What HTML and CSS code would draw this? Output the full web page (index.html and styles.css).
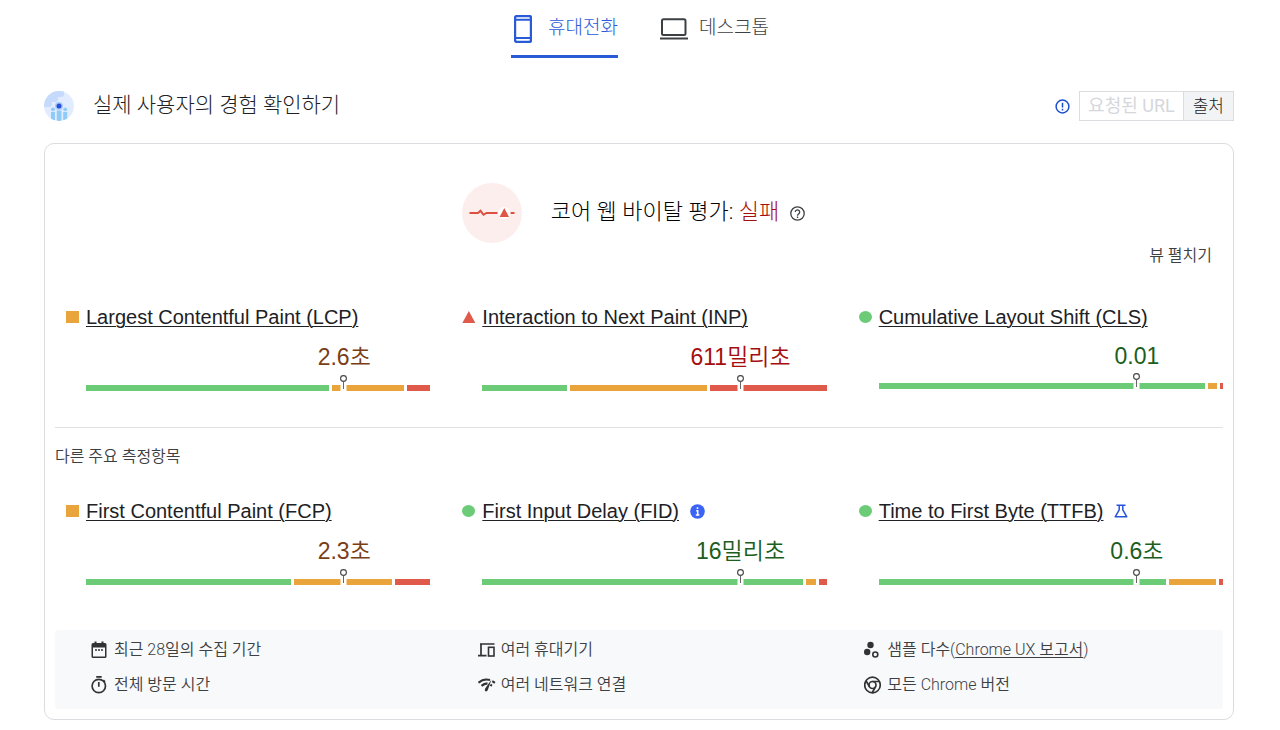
FILE: index.html
```html
<!DOCTYPE html>
<html lang="ko">
<head>
<meta charset="utf-8">
<meta name="viewport" content="width=device-width, initial-scale=1">
<title>실제 사용자의 경험 확인하기</title>
<link rel="stylesheet" href="styles.css">
</head>
<body>
<nav class="tabs" role="tablist">
  <button class="tab tab--active" type="button" role="tab" aria-selected="true">
    <svg class="tab-phone" width="18" height="28" viewBox="0 0 18 28" aria-hidden="true"><rect x="1" y="1" width="16" height="26" rx="2" fill="none" stroke="currentColor" stroke-width="2.4"/><path d="M1 4.8h16M1 23h16" stroke="currentColor" stroke-width="2"/></svg>
    <span>휴대전화</span>
  </button>
  <button class="tab" type="button" role="tab" aria-selected="false">
    <svg width="28" height="22" viewBox="0 0 28 22" aria-hidden="true"><rect x="2" y="1.2" width="23.500" height="15.8" rx="1.5" fill="none" stroke="currentColor" stroke-width="2"/><path d="M0 20.5h28" stroke="currentColor" stroke-width="2"/></svg>
    <span>데스크톱</span>
  </button>
</nav>

<main class="page">
  <header class="page-head">
    <svg width="30" height="30" viewBox="0 0 30 30" aria-hidden="true">
      <defs><clipPath id="disc"><circle cx="15" cy="15" r="15"/></clipPath></defs>
      <g clip-path="url(#disc)">
        <rect width="30" height="30" fill="#e1ecfe"/>
        <path d="M0 0h20v3a3 3 0 0 1-3 3h-3v2a3 3 0 0 1-3 3H8v2a3 3 0 0 1-3 3H0z" fill="#c5dafc"/>
        <g fill="#90caf9"><rect x="7" y="21" width="4" height="10"/><rect x="12.8" y="19.5" width="4.6" height="11"/><rect x="19.2" y="21" width="4" height="10"/><circle cx="9" cy="18.3" r="1.9"/><circle cx="21.2" cy="18.3" r="1.9"/></g>
        <circle cx="15" cy="15" r="4" fill="#a9cdfb"/><circle cx="15" cy="15" r="2.5" fill="#2a4fd7"/>
      </g>
    </svg>
    <h1 class="page-title">실제 사용자의 경험 확인하기</h1>
    <svg class="notice" width="15" height="15" viewBox="0 0 15 15" role="img" aria-label="알림"><circle cx="7.5" cy="7.5" r="6.4" fill="none" stroke="#1a4fd0" stroke-width="1.5"/><path d="M7.5 3.7v4.7M7.5 9.8v1.6" stroke="#1a4fd0" stroke-width="1.5"/></svg>
    <div class="scope">
      <button class="scope-btn scope-btn--off" type="button" disabled>요청된 URL</button>
      <button class="scope-btn scope-btn--on" type="button">출처</button>
    </div>
  </header>

  <section class="card">
    <div class="verdict">
      <svg width="60" height="60" viewBox="0 0 60 60" aria-hidden="true"><circle cx="30" cy="30" r="30" fill="#fdeeee"/><path d="M7.500 30h8.500l2.500-2.200 3 4 3-1.800h11" fill="none" stroke="#dc5040" stroke-width="2"/><path d="M48.500 30h4" stroke="#dc5040" stroke-width="2"/><circle cx="42.300" cy="30" r="6" fill="#fff"/><path d="M42.300 25l4.700 9h-9.400z" fill="#df5747"/></svg>
      <h2 class="verdict-title">코어 웹 바이탈 평가: <span class="fail">실패</span></h2>
      <svg class="help" width="15" height="15" viewBox="0 0 15 15" role="img" aria-label="도움말"><circle cx="7.5" cy="7.5" r="6.700" fill="none" stroke="#3c4043" stroke-width="1.300"/><path d="M5.300 6.100a2.200 2.200 0 1 1 3.500 1.700c-.9.700-1.300 1-1.300 1.900M7.500 10.500v1.400" fill="none" stroke="#3c4043" stroke-width="1.300"/></svg>
    </div>
    <div class="expand"><button class="expand-btn" type="button">뷰 펼치기</button></div>

    <div class="metrics">
      <article class="metric">
        <div class="metric-head"><i class="mark mark--mid"></i><a class="metric-name" href="#lcp">Largest Contentful Paint (LCP)</a></div>
        <div class="metric-value mid">2.6초</div>
        <div class="bar"><span class="seg seg--good" style="flex-grow:245"></span><span class="seg seg--mid" style="flex-grow:72"></span><span class="seg seg--poor" style="flex-grow:24"></span><svg class="pin" width="7" height="16" viewBox="0 0 7 16"><path d="M0.500 10h6v6h-6z" fill="#fff"/><circle cx="3.500" cy="3.500" r="2.900" fill="#fff" stroke="#444" stroke-width="1.100"/><path d="M3.500 6.500v7.500" stroke="#666"/></svg></div>
      </article>
      <article class="metric">
        <div class="metric-head"><i class="mark mark--poor"></i><a class="metric-name" href="#inp">Interaction to Next Paint (INP)</a></div>
        <div class="metric-value poor">611밀리초</div>
        <div class="bar"><span class="seg seg--good" style="flex-grow:85"></span><span class="seg seg--mid" style="flex-grow:138"></span><span class="seg seg--poor" style="flex-grow:117"></span><svg class="pin" width="7" height="16" viewBox="0 0 7 16"><path d="M0.500 10h6v6h-6z" fill="#fff"/><circle cx="3.500" cy="3.500" r="2.900" fill="#fff" stroke="#444" stroke-width="1.100"/><path d="M3.500 6.500v7.500" stroke="#666"/></svg></div>
      </article>
      <article class="metric">
        <div class="metric-head"><i class="mark mark--good"></i><a class="metric-name" href="#cls">Cumulative Layout Shift (CLS)</a></div>
        <div class="metric-value metric-value--plain good">0.01</div>
        <div class="bar"><span class="seg seg--good" style="flex-grow:327"></span><span class="seg seg--mid" style="flex-grow:9"></span><span class="seg seg--poor" style="flex-grow:3"></span><svg class="pin" width="7" height="16" viewBox="0 0 7 16"><path d="M0.500 10h6v6h-6z" fill="#fff"/><circle cx="3.500" cy="3.500" r="2.900" fill="#fff" stroke="#444" stroke-width="1.100"/><path d="M3.500 6.500v7.500" stroke="#666"/></svg></div>
      </article>
    </div>

    <h3 class="other-title">다른 주요 측정항목</h3>

    <div class="metrics metrics--other">
      <article class="metric">
        <div class="metric-head"><i class="mark mark--mid"></i><a class="metric-name" href="#fcp">First Contentful Paint (FCP)</a></div>
        <div class="metric-value mid">2.3초</div>
        <div class="bar"><span class="seg seg--good" style="flex-grow:205"></span><span class="seg seg--mid" style="flex-grow:99"></span><span class="seg seg--poor" style="flex-grow:35"></span><svg class="pin" width="7" height="16" viewBox="0 0 7 16"><path d="M0.500 10h6v6h-6z" fill="#fff"/><circle cx="3.500" cy="3.500" r="2.900" fill="#fff" stroke="#444" stroke-width="1.100"/><path d="M3.500 6.500v7.500" stroke="#666"/></svg></div>
      </article>
      <article class="metric">
        <div class="metric-head"><i class="mark mark--good"></i><a class="metric-name" href="#fid">First Input Delay (FID)</a>
          <svg width="15" height="15" viewBox="0 0 15 15" role="img" aria-label="정보"><circle cx="7.500" cy="7.500" r="7.300" fill="#3b63f6"/><path d="M7.500 3.300v1.700M6.200 6.700h1.500v4M5.800 11h3.600" fill="none" stroke="#fff" stroke-width="1.500"/></svg></div>
        <div class="metric-value good">16밀리초</div>
        <div class="bar"><span class="seg seg--good" style="flex-grow:321"></span><span class="seg seg--mid" style="flex-grow:10"></span><span class="seg seg--poor" style="flex-grow:8"></span><svg class="pin" width="7" height="16" viewBox="0 0 7 16"><path d="M0.500 10h6v6h-6z" fill="#fff"/><circle cx="3.500" cy="3.500" r="2.900" fill="#fff" stroke="#444" stroke-width="1.100"/><path d="M3.500 6.500v7.500" stroke="#666"/></svg></div>
      </article>
      <article class="metric">
        <div class="metric-head"><i class="mark mark--good"></i><a class="metric-name" href="#ttfb">Time to First Byte (TTFB)</a>
          <svg width="14" height="14" viewBox="0 0 14 14" role="img" aria-label="실험용"><path d="M2.500 1.200h9M5.200 1.200v4.600L1.200 12.800h11.600L8.800 5.800V1.200" fill="none" stroke="#2754dc" stroke-width="1.500" stroke-linejoin="round"/></svg></div>
        <div class="metric-value good">0.6초</div>
        <div class="bar"><span class="seg seg--good" style="flex-grow:288"></span><span class="seg seg--mid" style="flex-grow:47"></span><span class="seg seg--poor" style="flex-grow:4"></span><svg class="pin" width="7" height="16" viewBox="0 0 7 16"><path d="M0.500 10h6v6h-6z" fill="#fff"/><circle cx="3.500" cy="3.500" r="2.900" fill="#fff" stroke="#444" stroke-width="1.100"/><path d="M3.500 6.500v7.500" stroke="#666"/></svg></div>
      </article>
    </div>

    <ul class="facts">
      <li class="fact"><svg width="18" height="18" viewBox="0 0 18 18" aria-hidden="true"><path d="M3.500 0.500h2v1.500h5v-1.500h2V2h1.500q1.500 0 1.500 1.500v12q0 1.500-1.500 1.500h-12q-1.500 0-1.500-1.500v-12Q.5 2 2 2h1.500z" fill="#333"/><path d="M2 6.500h12v9H2z" fill="#f8f9fa"/><path d="M4 9h2M7 9h2M10 9h2" stroke="#333" stroke-width="1.500"/></svg><span>최근 28일의 수집 기간</span></li>
      <li class="fact"><svg width="18" height="18" viewBox="0 0 18 18" aria-hidden="true"><path d="M2 3h14.500M3 3v11.700M0 14.700h8.500" fill="none" stroke="#333" stroke-width="1.700"/><rect x="10.500" y="6.300" width="5.500" height="8.700" fill="none" stroke="#333" stroke-width="1.600"/></svg><span>여러 휴대기기</span></li>
      <li class="fact"><svg width="18" height="18" viewBox="0 0 18 18" aria-hidden="true"><circle cx="6.500" cy="4" r="3.200" fill="#333"/><circle cx="3.200" cy="11" r="3.200" fill="#333"/><circle cx="11.300" cy="13.500" r="2.500" fill="none" stroke="#333" stroke-width="1.600"/></svg><span>샘플 다수(<a class="report" href="#crux">Chrome UX 보고서</a>)</span></li>
      <li class="fact"><svg width="18" height="18" viewBox="0 0 18 18" aria-hidden="true"><circle cx="7.800" cy="10" r="6.700" fill="none" stroke="#333" stroke-width="1.700"/><path d="M5.200 .9h5.500M7.800 6v4.700M12.300 4.200l1.700 1.700" stroke="#333" stroke-width="1.700"/></svg><span>전체 방문 시간</span></li>
      <li class="fact"><svg width="18" height="18" viewBox="0 0 18 18" fill="none" stroke="#333" aria-hidden="true"><path d="M.5 6.800Q5.500 2.200 12 4M3.500 9.900q2.500-2.300 6-2.500M14.300 5.200l2.600 1.700M12.400 8.700l1.500 1.100" stroke-width="2.200"/><path d="M13.500 3.500L7 12.800q-.8 2.100.8 2.600 1.500.2 2.100-1.600z" fill="#333" stroke="none"/></svg><span>여러 네트워크 연결</span></li>
      <li class="fact"><svg width="18" height="18" viewBox="0 0 18 18" fill="none" stroke="#333" stroke-width="1.700" aria-hidden="true"><circle cx="8.500" cy="9" r="7.800"/><circle cx="8.500" cy="9" r="3.500"/><path d="M8.500 5.500h7M11.500 10.800L8 17M5.500 10.800L2 4.800"/></svg><span>모든 Chrome 버전</span></li>
    </ul>
  </section>
</main>
</body>
</html>
```
FILE: styles.css
```css
* { box-sizing: border-box; }

body {
  margin: 0;
  background: #fff;
  color: #202124;
  font-family: Roboto, "Noto Sans CJK KR", sans-serif;
  font-size: 16px;
  font-weight: 300;
}

button {
  font: inherit;
  color: inherit;
  background: none;
  border: 0;
  padding: 0;
  cursor: pointer;
}

h1, h2, h3, ul { margin: 0; padding: 0; font-weight: inherit; }
svg { display: block; flex: none; }

.tabs { display: flex; justify-content: center; gap: 42px; height: 58px; }
.tab {
  display: flex;
  align-items: center;
  gap: 11px;
  padding-bottom: 4px;
  border-bottom: 3px solid transparent;
  color: #3c4043;
  font-size: 19px;
}
.tab--active { gap: 16px; padding-left: 3px; color: #2a5bd7; border-color: #2a5bd7; }
.tab svg { margin-top: 6px; }

.page { padding: 33px 46px 10px 44px; }
.page-head { display: flex; align-items: center; height: 30px; margin-bottom: 22px; }
.page-title { flex: 1; margin-left: 19px; font-size: 21px; line-height: 26px; padding-bottom: 3px; }
.notice { margin-right: 9px; }
.scope { display: flex; }
.scope-btn { height: 30px; padding: 0 9px; border: 1px solid #dadce0; font-size: 17px; line-height: 26px; }
.scope-btn--off { padding: 0 8px; border-right: 0; color: #d5d7dc; font-weight: 400; font-size: 18px; }
.scope-btn--on { background: #f1f3f4; }

.card { padding: 39px 10px 10px; border: 1px solid #dadce0; border-radius: 10px; }

.verdict { display: flex; align-items: center; justify-content: center; padding-right: 11px; }
.verdict-title { margin: 0 11px 0 29px; padding-bottom: 3px; font-size: 22px; line-height: 28px; color: #000; }
.fail { color: #a50e0e; }

.expand { display: flex; justify-content: flex-end; margin-top: 3px; padding-right: 11px; }
.expand-btn { font-size: 16px; font-weight: 350; line-height: 20px; color: #3c4043; }

.metrics {
  display: grid;
  grid-template-columns: repeat(3, 1fr);
  gap: 32px;
  margin-top: 39px;
  padding: 0 0 36px 11px;
  font-family: "Liberation Sans", "Noto Sans CJK KR", sans-serif;
}
.metrics + .other-title { border-top: 1px solid #dfe1e5; }
.metric { padding-left: 20px; }
.metric-head { display: flex; align-items: center; margin-left: -20px; }
.metric-name { margin-right: 11px; color: #202124; font-size: 20px; line-height: 24px; text-underline-offset: 2px; text-decoration-thickness: 1px; }
.mark { flex: none; width: 13px; height: 12px; margin-right: 7px; }
.mark--good { background: #6bcb77; border-radius: 50%; }
.mark--mid { background: #e9a53c; }
.mark--poor { background: #e05a4b; clip-path: polygon(50% 0, 100% 100%, 0 100%); }

.metric-value { margin: 14px 0 14px 50%; text-align: center; font-size: 23px; font-weight: 350; line-height: 28px; }
.metric-value--plain { line-height: 26px; }
.good { color: #1b5e20; }
.mid { color: #7a3e17; }
.poor { color: #a50e0e; }

.bar { position: relative; display: flex; gap: 3px; height: 6px; }
.seg { flex: 1 1 0; }
.seg--good { background: #6bcb77; }
.seg--mid { background: #e9a53c; }
.seg--poor { background: #e05a4b; }
.pin { position: absolute; left: 75%; bottom: 0; margin-left: -4px; }

.other-title { padding-top: 19px; font-size: 16px; font-weight: 350; line-height: 20px; color: #3c4043; }
.metrics--other { margin-top: 32px; padding-bottom: 45px; }

.facts {
  display: grid;
  grid-template-columns: repeat(3, 1fr);
  gap: 11px 28px;
  padding: 8px 0 12px 36px;
  border-radius: 4px;
  background: #f8f9fa;
  color: #3c4043;
  font-weight: 350;
  list-style: none;
}
.fact { display: flex; align-items: center; gap: 5px; font-size: 16px; line-height: 24px; }
.report { color: inherit; text-underline-offset: 2px; }
```
